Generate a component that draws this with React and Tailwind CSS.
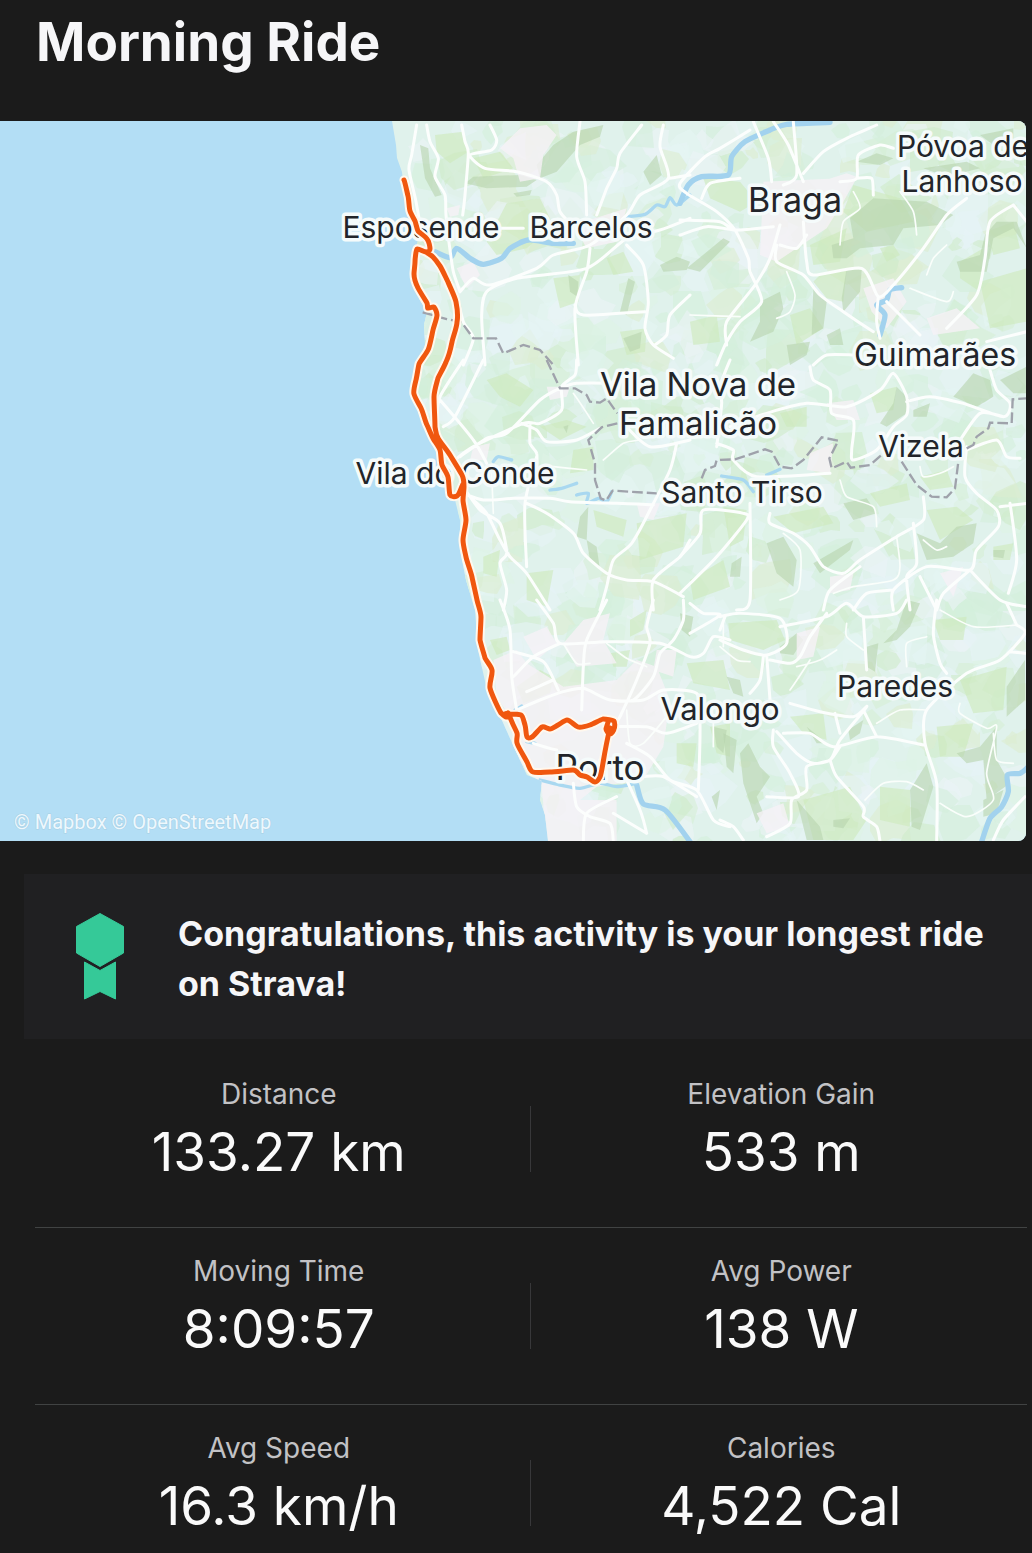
import React from "react";

const LAND =
  "M392 121 L396 145 L397 158 L402 172 L405 200 L412 225 L418 240 L414 255 L412 280 L420 300 L427 312 L424 325 L425 345 L415 370 L412 395 L425 430 L436 450 L442 480 L455 500 L460 520 L460 550 L466 580 L475 610 L478 650 L487 690 L500 716 L513 745 L527 775 L542 781 L540 800 L545 815 L548 841 H1026 V121 Z";

const PATCH_COLORS = ["#d3f0dc", "#d5efd6", "#dcedd0", "#e4f5f3", "#e6f3f6", "#d3efdc", "#cfebc9", "#ddf3e6", "#ebf4f7"];

function makePatches() {
  let seed = 77;
  const rnd = () => {
    seed = (seed * 16807) % 2147483647;
    return seed / 2147483647;
  };
  const list = [];
  for (let i = 0; i < 1000; i++) {
    const cx = 400 + rnd() * 630;
    const cy = 115 + rnd() * 730;
    const r = 6 + rnd() * 19;
    const n = 6 + Math.floor(rnd() * 4);
    const pts = [];
    for (let k = 0; k < n; k++) {
      const a = (k / n) * Math.PI * 2;
      const d = r * (0.5 + rnd() * 0.75);
      pts.push(`${Math.round(cx + Math.cos(a) * d * 1.1)},${Math.round(cy + Math.sin(a) * d)}`);
    }
    list.push({ points: pts.join(" "), fill: PATCH_COLORS[Math.floor(rnd() * PATCH_COLORS.length)] });
  }
  return list;
}
const PATCHES = makePatches();

// Turns an open polyline path into a curve through the same points.
function smooth(d) {
  const n = d.match(/-?\d+/g).map(Number);
  const p = [];
  for (let i = 0; i < n.length; i += 2) p.push([n[i], n[i + 1]]);
  let out = `M${p[0][0]} ${p[0][1]}`;
  for (let i = 0; i < p.length - 1; i++) {
    const a = p[i - 1] || p[i];
    const b = p[i];
    const c = p[i + 1];
    const e = p[i + 2] || c;
    const x1 = Math.round(b[0] + (c[0] - a[0]) / 8);
    const y1 = Math.round(b[1] + (c[1] - a[1]) / 8);
    const x2 = Math.round(c[0] - (e[0] - b[0]) / 8);
    const y2 = Math.round(c[1] - (e[1] - b[1]) / 8);
    out += ` C${x1} ${y1} ${x2} ${y2} ${c[0]} ${c[1]}`;
  }
  return out;
}
const smoothAll = (list) => list.map(smooth).join(" ");

// Each sheet is surveyed at three units per map unit from its own origin.
const SHEETS = [
  {
    at: "translate(340 115) scale(0.333333)",
    urban: ["M480 100 L540 40 L620 30 L650 60 L610 120 L600 190 L540 200 L520 130Z", "M700 330 L860 280 L830 380 L740 400Z", "M350 460 L400 440 L420 480 L380 520Z", "M320 280 L360 270 L355 300 L330 305Z"],
    green: ["M285 60 L370 50 L385 110 L330 145 L290 110Z", "M500 265 L600 250 L640 330 L560 400 L470 420 L440 380Z", "M400 130 L480 110 L520 160 L430 190Z", "M640 490 L720 480 L715 560 L660 580Z", "M840 650 L920 640 L915 710 L860 720Z", "M850 410 L800 430 L820 480 L880 470Z"],
    hill: ["M375 205 L400 185 L540 180 L590 195 L560 215 L440 220Z", "M590 150 L640 90 L700 50 L790 30 L780 65 L720 90 L650 170 L600 190Z", "M240 90 L265 100 L270 160 L305 240 L285 245 L255 190Z", "M960 450 L1010 425 L1050 440 L1040 465 L970 470Z", "M865 490 L885 500 L860 600 L840 590Z", "M910 170 L950 120 L965 180 L930 210Z", "M685 480 L715 500 L712 545 L690 530Z", "M520 235 L575 225 L570 240 L530 245Z", "M850 670 L905 650 L900 700 L870 710Z"],
    water: ["M285 410 L330 428 L350 400 L390 430 L430 448 L485 430 L510 400 L565 375 L640 385 L700 385"],
    water2: ["M860 305 L915 298 L950 270 L975 275 L990 248 L1010 270 L1050 240"],
    roads: ["M230 30 L215 120 L207 165 L228 260 L240 330", "M260 30 L270 80 L295 130 L285 185 L315 240 L318 300 L328 390 L340 470 L360 530", "M365 30 L375 80 L385 115 L375 240 L368 300", "M450 30 L470 75 L455 105 L390 120 L435 160 L530 170 L620 200 L650 240 L660 290 L700 330 L750 330", "M720 20 L710 125 L735 200 L740 300", "M905 30 L840 115 L830 160 L800 220 L770 300", "M970 30 L960 95 L985 190 L900 240 L860 300 L750 390 L640 420 L590 460 L450 510 L400 490 L360 530", "M985 190 L1050 180", "M1050 310 L960 345 L860 370 L740 460 L530 490 L440 530 L425 600 L435 750", "M860 390 L910 450 L925 560 L915 640 L940 690 L1000 730", "M750 400 L740 470 L705 580 L715 750", "M705 570 L730 600 L915 590", "M350 540 L370 620 L400 670 L370 750", "M480 340 L550 340", "M1050 540 L990 600 L980 660 L945 690"],
    border: ["M248 592 L320 612 L365 622 L400 670 L468 670 L490 715 L550 690 L600 705 L640 750"],
  },
  {
    at: "translate(680 115) scale(0.333333)",
    urban: ["M250 200 L480 190 L530 190 L490 260 L440 340 L290 440 L240 420Z", "M420 200 L500 175 L530 185 L500 210 L440 220Z", "M550 520 L640 490 L680 560 L620 640 L575 590Z", "M740 610 L830 580 L900 640 L760 660Z"],
    green: ["M70 190 L180 200 L230 260 L180 290 L90 250Z", "M390 390 L500 340 L480 440 L400 450Z", "M420 480 L500 465 L490 560 L440 550 L400 500Z", "M840 440 L910 400 L900 530 L840 490Z", "M920 350 L1000 320 L1020 400 L940 420Z", "M520 210 L660 250 L700 320 L560 350 L490 290Z", "M330 600 L390 580 L430 640 L350 690Z", "M900 500 L1040 460 L1040 620 L930 640Z", "M30 620 L110 600 L120 680 L40 690Z", "M600 400 L640 390 L660 420 L620 440Z"],
    hill: ["M455 390 L520 370 L510 310 L580 250 L740 260 L820 300 L780 330 L670 340 L640 390 L540 400 L500 430 L460 430Z", "M500 460 L545 465 L540 530 L490 590 L485 550Z", "M400 520 L440 560 L430 640 L395 660Z", "M830 440 L900 420 L915 360 L950 320 L1010 320 L1040 400 L1000 340 L940 370 L920 470 L840 470Z", "M240 560 L300 530 L310 580 L280 650 L210 680 L240 620Z", "M320 690 L390 680 L380 720 L330 750Z", "M530 140 L590 115 L640 130 L600 150Z", "M20 460 L130 370 L150 380 L60 470Z", "M940 90 L1000 70 L1000 40 L900 60Z", "M440 660 L480 640 L490 690 L450 690Z", "M730 160 L860 140 L900 160 L800 185Z"],
    water: ["M0 265 L25 210 L65 185 L145 180 L155 125 L195 80 L270 45 L320 28 L450 22", "M600 660 L615 600 L590 570 L620 555 L630 525 L665 518"],
    water2: [],
    roads: ["M220 20 L265 130 L275 200", "M280 20 L325 90 L370 200", "M340 20 L350 180 L310 210", "M210 45 L120 100 L75 125 L0 205 L20 235 L110 290 L165 345 L205 430 L210 470 L245 560 L180 620 L140 680 L110 750", "M0 315 L120 320 L165 345 L280 335", "M0 360 L80 335 L160 345", "M590 30 L500 70 L430 110 L370 175", "M65 250 L90 205 L180 190", "M640 100 L600 90 L535 120 L530 190 L480 200", "M530 190 L575 190 L580 240", "M300 330 L270 430 L225 510 L140 620 L140 690", "M370 320 L380 440 L400 480 L545 460 L595 545 L640 510 L730 400 L800 300 L860 250", "M290 390 L290 440 L370 480 L420 540 L490 590 L580 650", "M595 545 L590 620 L600 670", "M620 560 L720 660", "M1000 270 L930 320 L915 430 L890 540 L800 640", "M1000 270 L1040 320", "M400 750 L440 720 L520 720", "M920 680 L1040 650", "M300 390 L350 400 L380 360"],
    lanes: ["M520 230 L540 280 L490 320 L480 390", "M660 230 L700 290 L710 360", "M320 470 L345 540 L330 590 L290 610", "M30 600 L180 605", "M740 480 L760 430 L800 390", "M690 520 L800 560 L820 530"],
    border: [],
  },
  {
    at: "translate(340 360) scale(0.333333)",
    urban: ["M400 260 L450 250 L440 300 L390 300Z", "M620 80 L690 80 L680 110 L630 120Z", "M890 430 L960 430 L940 480 L900 470Z"],
    green: ["M440 60 L500 40 L580 90 L540 140 L480 110Z", "M600 200 L680 180 L740 200 L660 240Z", "M760 450 L860 480 L850 530 L770 500Z", "M430 590 L480 570 L470 650 L430 640Z", "M890 490 L1040 460 L1030 560 L900 600Z", "M700 270 L760 260 L760 330 L690 340Z", "M560 640 L640 630 L620 740 L560 720Z"],
    hill: ["M720 470 L745 440 L740 540 L770 560 L780 630 L750 600 L740 540 L710 530Z", "M670 200 L685 195 L680 220Z", "M860 190 L910 170 L900 200Z"],
    water: [],
    water2: ["M460 305 L475 290 L515 300", "M630 390 L665 385 L710 370", "M710 405 L745 400 L740 430 L775 415 L800 425 L815 395"],
    roads: ["M370 0 L300 110 L290 180", "M430 0 L345 170 L310 200", "M300 120 L400 240 L440 310", "M360 290 L440 235 L500 220 L600 120 L660 85 L710 70 L830 70", "M710 0 L705 45 L665 80 L665 150 L600 190 L550 190 L400 260 L345 300", "M545 190 L590 210 L620 245 L710 240 L780 205", "M570 195 L570 250 L590 280 L590 330", "M370 400 L430 420 L520 415 L630 415 L690 425 L830 430 L940 435", "M400 420 L440 460 L480 540 L510 590 L560 640 L630 750", "M370 380 L420 450 L480 490 L500 580 L480 610 L500 690 L490 750", "M590 290 L555 430 L560 620", "M560 430 L620 460 L700 520 L730 580 L800 640 L860 660 L940 665 L1030 710", "M1050 540 L1020 590 L940 660 L940 750", "M1010 250 L990 330 L930 450 L875 550 L820 600 L800 680 L780 750", "M850 190 L930 260 L1050 240"],
    lanes: ["M700 100 L760 190", "M790 300 L850 250 L900 240", "M455 340 L460 460", "M640 320 L740 330"],
    border: ["M620 0 L660 85 L705 85 L740 105 L750 125 L780 128 L800 115 L832 160", "M832 190 L785 202 L745 240 L765 310 L765 360 L782 415 L798 422 L818 392 L950 400"],
  },
  {
    at: "translate(680 360) scale(0.333333)",
    urban: ["M440 130 L520 120 L540 180 L470 180Z", "M390 280 L460 250 L450 340 L380 330Z", "M450 650 L520 640 L510 690 L450 700Z", "M780 640 L850 620 L820 710Z"],
    green: ["M570 100 L650 80 L640 150 L590 160Z", "M280 470 L430 440 L460 490 L340 520Z", "M570 400 L680 370 L690 420 L600 440Z", "M740 450 L830 440 L880 480 L780 540Z", "M130 440 L200 450 L190 540 L150 560Z", "M720 350 L800 330 L820 380 L750 390Z", "M30 660 L130 600 L150 680 L40 720Z", "M300 160 L380 140 L380 200 L320 200Z", "M940 560 L1000 550 L990 600 L940 600Z"],
    hill: ["M600 190 L640 130 L650 80 L690 120 L680 160 L620 200Z", "M260 550 L310 530 L350 600 L340 680 L290 640Z", "M490 430 L560 415 L590 460 L520 480Z", "M710 520 L780 550 L830 500 L890 490 L880 550 L820 590 L740 600Z", "M400 610 L520 540 L510 570 L420 640Z", "M820 110 L880 40 L930 60 L940 110 L890 140Z", "M940 570 L975 570 L970 595 L940 590Z", "M155 610 L185 590 L180 650 L150 650Z", "M700 150 L750 130 L740 170 L700 170Z", "M960 60 L1040 20 L1040 100 L1000 100Z"],
    water: [],
    water2: ["M125 348 L190 360 L220 395", "M260 345 L300 328"],
    roads: ["M150 0 L120 80 L125 130 L110 260", "M390 20 L400 60 L450 90 L455 160 L520 180 L515 270 L520 300 L590 270 L640 200 L680 165 L680 110 L640 40 L600 90 L500 140 L380 130 L260 160 L150 200", "M680 125 L750 110 L850 130 L970 170 L990 130 L950 90 L930 30", "M970 170 L900 160 L840 240", "M110 250 L160 270 L160 300 L230 350 L450 340", "M0 590 L60 520 L70 450 L190 460 L200 480 L110 590 L0 700", "M210 430 L210 720 L170 750", "M270 460 L270 490 L340 520 L390 560 L430 620 L490 640 L540 600 L650 530 L730 480 L730 410", "M430 750 L450 690 L540 620", "M700 490 L710 610 L680 650 L690 750", "M860 260 L855 350 L890 400 L950 450 L955 500 L890 570 L870 630 L740 620 L640 690 L640 750", "M870 630 L960 720 L1040 740", "M960 440 L1040 430", "M860 270 L950 240 L980 290 L1020 295", "M990 430 L1010 600 L985 700", "M720 650 L770 750", "M870 630 L790 700 L770 750", "M520 750 L560 700 L640 690"],
    lanes: ["M310 520 L360 570 L355 690 L300 720", "M480 360 L500 410 L580 440 L590 500", "M720 320 L730 350 L780 340 L820 320", "M650 530 L660 620 L640 660 L520 680 L460 700", "M730 540 L770 570 L800 560"],
    border: ["M65 355 L75 330 L105 318 L110 300 L165 298 L255 268 L275 275 L300 320 L335 325 L370 300 L425 232 L475 242 L448 295 L455 325 L500 305 L512 323 L570 315 L610 280", "M665 305 L710 375 L755 410 L800 412 L825 385 L835 305", "M860 265 L880 255 L890 230 L925 205 L930 188 L995 190 L998 118 L1040 115"],
  },
  {
    at: "translate(430 600) scale(0.333333)",
    urban: ["M190 180 L260 150 L290 190 L370 240 L400 260 L560 240 L620 180 L680 200 L720 300 L700 440 L640 540 L500 560 L450 600 L560 600 L560 725 L350 725 L335 560 L300 510 L260 380 L200 290Z", "M280 110 L350 80 L380 130 L320 180Z", "M680 150 L740 150 L730 230 L670 210Z", "M400 130 L460 60 L540 40 L520 120 L560 190 L440 200Z"],
    green: ["M260 260 L330 210 L370 230 L360 280 L280 310Z", "M180 120 L230 110 L240 150 L200 165Z", "M600 60 L650 30 L640 90 L600 110Z", "M770 190 L880 180 L900 270 L790 250Z", "M740 430 L800 430 L790 500 L740 490Z", "M540 160 L600 150 L590 200 L550 200Z", "M840 380 L900 370 L900 470 L860 460Z"],
    hill: ["M750 40 L790 50 L780 110 L755 90Z", "M850 380 L890 390 L880 460 L860 440Z", "M845 590 L870 570 L860 630Z"],
    water: ["M620 555 L640 612 L705 630 L780 725"],
    water2: ["M330 540 L390 555 L450 565 L510 550 L560 560 L620 550", "M255 330 L275 318", "M290 425 L315 430"],
    roads: ["M210 0 L240 90 L245 230 L260 330", "M320 0 L370 70 L390 130 L530 125 L690 130 L780 170 L820 160 L850 110 L900 120", "M250 155 L340 185 L385 270", "M670 0 L650 80 L660 130 L620 240 L570 350 L545 390", "M530 0 L470 120 L460 200 L455 330", "M390 130 L310 170 L250 230", "M760 0 L760 60 L730 120 L690 160 L670 230 L610 300 L540 300", "M260 330 L330 300 L400 275 L460 265 L540 300 L640 300 L700 270 L800 280 L810 370 L805 570", "M290 275 L370 240", "M550 380 L650 380 L710 400 L800 370", "M590 430 L660 470 L720 540 L800 570 L850 660 L900 680", "M640 530 L700 530 L800 590", "M430 550 L440 620 L480 650 L540 670 L550 725", "M560 590 L470 640 L460 725", "M590 540 L630 630 L650 700", "M550 640 L650 700", "M310 430 L380 450", "M780 10 L820 40 L870 45 L780 100"],
    lanes: ["M880 60 L880 140", "M400 130 L440 190 L480 190", "M530 130 L590 175 L650 200", "M850 370 L850 440", "M590 330 L600 430 L640 430 L710 350"],
    border: [],
  },
  {
    at: "translate(720 600) scale(0.333333)",
    urban: ["M110 640 L190 610 L210 680 L140 700Z", "M230 100 L300 80 L280 170 L230 180Z"],
    green: ["M25 70 L170 60 L195 120 L130 150 L30 120Z", "M210 350 L310 340 L320 420 L250 400Z", "M640 60 L740 50 L730 120 L660 120Z", "M250 600 L390 560 L440 660 L400 720 L280 720Z", "M720 240 L860 200 L850 330 L760 340Z", "M650 380 L760 370 L730 470 L660 470Z", "M480 560 L570 570 L570 680 L480 660Z"],
    hill: ["M490 130 L530 90 L560 0 L600 10 L570 80 L530 120Z", "M60 460 L85 430 L120 500 L150 530 L110 590 L130 640 L110 670 L70 550Z", "M10 400 L50 420 L40 520 L20 500Z", "M570 570 L620 490 L640 560 L600 690 L575 680Z", "M230 600 L300 680 L310 720 L260 720Z", "M180 140 L230 100 L250 120 L220 165 L180 160Z", "M710 460 L780 440 L830 380 L830 480 L870 550 L800 600 L790 480 L740 490Z", "M860 260 L915 180 L915 300 L860 350Z", "M440 140 L475 130 L465 215 L440 200Z", "M340 660 L390 655 L370 685 L340 680Z", "M260 380 L320 430 L290 430Z", "M790 600 L850 570 L830 640 L790 650Z", "M385 390 L430 360 L420 400 L390 420Z", "M20 230 L60 240 L70 290 L40 280Z"],
    water: ["M920 505 L900 520 L862 525 L865 575 L845 620 L810 655 L785 725"],
    water2: [],
    roads: ["M0 50 L60 40 L180 55 L200 130 L140 165 L70 150 L0 120", "M180 80 L320 50 L380 10 L430 50 L530 40 L560 0", "M140 165 L150 300", "M130 170 L120 240 L90 280", "M150 180 L210 190 L240 170 L270 110 L320 40", "M430 50 L440 210", "M650 0 L640 100 L660 190 L680 220", "M890 75 L860 10", "M890 75 L915 100 L840 180 L740 220 L620 330 L615 430 L650 550 L650 725", "M870 155 L915 160", "M210 310 L300 335 L400 350 L440 320 L360 420 L330 480 L260 500 L260 570 L215 600 L210 670 L140 710", "M190 400 L270 400 L340 440 L470 410 L610 435", "M430 330 L470 410", "M160 390 L160 440 L210 520 L235 590 L140 590", "M170 395 L230 460 L280 490 L330 480 L360 440", "M330 480 L350 530 L430 620 L430 650 L470 680 L480 725", "M345 340 L360 400", "M915 590 L850 660 L820 720", "M0 660 L40 680 L70 720", "M0 90 L15 50"],
    lanes: ["M660 30 L760 80 L890 75", "M720 310 L720 340 L800 385 L830 380 L800 520 L820 600 L740 650 L660 610", "M820 400 L830 480 L880 490", "M435 600 L490 550 L560 545 L610 570", "M0 140 L50 180 L90 185", "M470 370 L540 330 L620 330", "M230 200 L300 180 L350 150", "M560 200 L560 130 L620 110", "M380 70 L380 110 L430 150", "M270 180 L210 270"],
    border: [],
  },
];

const ROUTE = [
  "M404 180 L408 196 L410 211 L415 221 L418 231 L427 239 L430 249 L426 252 L417 249 L415 262 L414 274 L418 288 L427 303 L428 308 L434 307 L437 315 L433 330 L428 350 L419 364 L416 380 L414 394 L421 408 L427 425 L434 440 L440 450 L442 465 L448 477 L450 495 L457 496 L463 484",
  "M426 252 L433 257 L440 266 L448 282 L456 302 L457 322 L452 342 L446 362 L438 378 L434 397 L435 427 L438 438 L450 455 L462 475 L464 487 L463 500 L466 520 L463 540 L466 557 L472 577 L477 600 L481 617 L480 640 L485 658 L492 670 L490 688 L501 713 L508 713 L510 716 L506 717 L501 713",
  "M508 714 L521 715 L525 725 L527 737 L532 737 L542 727 L550 729 L558 725 L567 720 L578 727 L590 725 L603 719 L614 721 L614 729 L610 734 L606 729 L608 722",
  "M610 728 L603 763 L600 777 L595 782 L587 777 L580 775 L573 770 L550 772 L533 772 L527 762 L517 743 L517 733 L512 722 L508 713",
];

const PLACES = [
  { name: "Esposende", x: 421, y: 238, size: 30 },
  { name: "Barcelos", x: 591, y: 238, size: 30 },
  { name: "Braga", x: 795, y: 212, size: 34 },
  { name: "Póvoa de", x: 963, y: 157, size: 30 },
  { name: "Lanhoso", x: 962, y: 192, size: 30 },
  { name: "Guimarães", x: 935, y: 366, size: 32 },
  { name: "Vila Nova de", x: 698, y: 396, size: 33 },
  { name: "Famalicão", x: 698, y: 435, size: 33 },
  { name: "Vizela", x: 921, y: 457, size: 30 },
  { name: "Vila do Conde", x: 455, y: 484, size: 30 },
  { name: "Santo Tirso", x: 742, y: 503, size: 30 },
  { name: "Paredes", x: 895, y: 697, size: 30 },
  { name: "Valongo", x: 720, y: 720, size: 31 },
  { name: "Porto", x: 600, y: 780, size: 35 },
];

function RideMap() {
  const route = smoothAll(ROUTE);
  return (
    <svg viewBox="0 121 1026 720" className="block w-full" role="img" aria-label="Route map from Porto to Esposende">
      <defs>
        <clipPath id="land">
          <path d={LAND} />
        </clipPath>
      </defs>
      <rect y="121" width="1026" height="720" fill="#b3def5" />
      <path d={LAND} fill="#e0f2ec" />
      <g clipPath="url(#land)">
        {PATCHES.map((p, i) => (
          <polygon key={i} points={p.points} fill={p.fill} opacity="0.6" />
        ))}
        {SHEETS.map((s) => (
          <g key={s.at} transform={s.at}>
            <path d={s.green.join(" ")} fill="#cde9ba" opacity="0.6" />
            <path d={s.hill.join(" ")} fill="#b7d3ae" opacity="0.6" />
            <path d={s.urban.join(" ")} fill="#f6f1f6" opacity="0.8" />
          </g>
        ))}
        {SHEETS.map((s) => (
          <g key={s.at} transform={s.at} fill="none" strokeLinejoin="round" strokeLinecap="round">
            <path d={smoothAll(s.water)} stroke="#a2d2ee" strokeWidth="16" />
            <path d={smoothAll(s.water2)} stroke="#a9d8f0" strokeWidth="10" />
            <path d={smoothAll(s.lanes || [])} stroke="#fafefb" strokeWidth="5" />
            <path d={smoothAll(s.roads)} stroke="#fcfefd" strokeWidth="9" />
          </g>
        ))}
      </g>
      {SHEETS.map((s) => (
        <path key={s.at} transform={s.at} d={s.border.join(" ")} fill="none" stroke="#9fa2ab" strokeWidth="7" strokeDasharray="32 12" />
      ))}
      <g fontFamily="Inter, Roboto, sans-serif" textAnchor="middle" fill="#22252a" stroke="#f5fbfb" strokeWidth="7" strokeLinejoin="round" paintOrder="stroke">
        {PLACES.map((p) => (
          <text key={p.name} x={p.x} y={p.y} fontSize={p.size}>
            {p.name}
          </text>
        ))}
      </g>
      <text x="14" y="829" fontFamily="Roboto, sans-serif" fontSize="20" fill="#eef8fd" stroke="#a6cfe4" strokeWidth="1" paintOrder="stroke">
        © Mapbox © OpenStreetMap
      </text>
      <g fill="none" strokeLinejoin="round" strokeLinecap="round">
        <path d={route} stroke="#fff8ee" strokeWidth="9" />
        <path d={route} stroke="#f0570f" strokeWidth="5" />
      </g>
    </svg>
  );
}

function Stat({ label, value }) {
  return (
    <div className="min-w-0 flex-1 text-center">
      <dt className="text-[28px] leading-10 text-[#c2c2c5]">{label}</dt>
      <dd className="mt-1 text-[53px] leading-[68px] text-[#fafafa]">{value}</dd>
    </div>
  );
}

const STATS = [
  [["Distance", "133.27 km"], ["Elevation Gain", "533 m"]],
  [["Moving Time", "8:09:57"], ["Avg Power", "138 W"]],
  [["Avg Speed", "16.3 km/h"], ["Calories", "4,522 Cal"]],
];

export default function App() {
  return (
    <main className="bg-[#1b1b1b] font-[Inter,Roboto,sans-serif] text-[#f6f6f8]">
      <header className="px-9 pt-2 pb-[45px]">
        <h1 className="text-[53px] leading-[68px] font-bold">Morning Ride</h1>
      </header>
      <div className="mr-1.5 overflow-hidden rounded-r-lg">
        <RideMap />
      </div>
      <section className="mt-[33px] ml-6 flex items-start gap-[53px] bg-[#202022] pt-[35px] pr-8 pb-[30px] pl-[51px]">
        <svg viewBox="0 0 50 90" className="mt-0.5 h-[90px] w-[50px] shrink-0" fill="#35c998" stroke="#35c998" strokeWidth="1" strokeLinejoin="round" aria-hidden="true">
          <path d="M25 2.500 L48.500 15.500 V42 L25 55.500 L1.500 42 V15.500Z" />
          <path d="M9.500 51 L25 59.500 L40.500 51 V88 L25 80.500 L9.500 88Z" />
        </svg>
        <p className="min-w-0 text-[34px] leading-[50px] font-bold">Congratulations, this activity is your longest ride on Strava!</p>
      </section>
      <div className="mt-3 ml-7">
        {STATS.map(([left, right], i) => (
          <div key={left[0]}>
            <dl className={i < 2 ? "flex pt-[23px] pb-[41px]" : "flex pt-[23px] pb-[13px]"}>
              <Stat label={left[0]} value={left[1]} />
              <div className="mt-8 h-[66px] w-px bg-[#38383a]" />
              <Stat label={right[0]} value={right[1]} />
            </dl>
            {i < 2 && <div className="mr-[5px] ml-[7px] h-px bg-[#414343]" />}
          </div>
        ))}
      </div>
    </main>
  );
}
